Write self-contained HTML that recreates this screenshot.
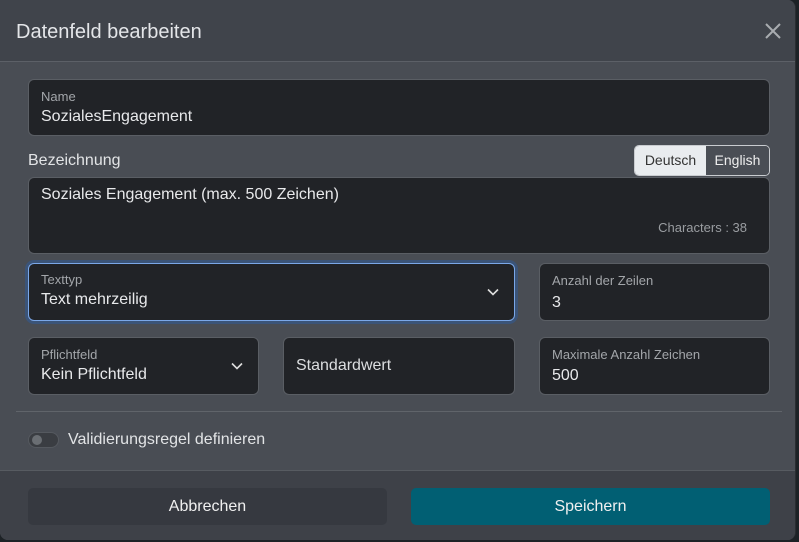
<!DOCTYPE html>
<html><head><meta charset="utf-8"><style>
*{box-sizing:border-box;margin:0;padding:0}
body{width:799px;height:542px;background:#1d2226;font-family:"Liberation Sans",sans-serif;position:relative;overflow:hidden}
.modal{position:absolute;left:0;top:0;width:796px;height:540px;background:#494d54;border-radius:0 8px 8px 8px;overflow:hidden;border-right:1px solid #2a2d31}
.hdr{position:absolute;left:0;top:0;right:0;height:62px;background:#40444b;border-bottom:1px solid #5c6067}
.hdr h1{position:absolute;left:16px;top:21px;font-size:20px;font-weight:normal;color:#e4e6e9}
.x{position:absolute;left:764px;top:22px}
.f{position:absolute;background:#212327;border:1px solid #5a5e64;border-radius:6px}
.lb{position:absolute;left:12px;font-size:13px;color:#a3a6aa}
.v{position:absolute;left:12px;font-size:16px;color:#e8e9eb}
.chev{position:absolute;top:50%;margin-top:-4px}
.ftr{position:absolute;left:0;right:0;top:470px;bottom:0;background:#3e4148;border-top:1px solid #575b61}
.btn{position:absolute;top:17px;height:37px;border-radius:5px;font-size:16px;color:#f0f0f0;text-align:center;line-height:37px}
</style></head><body>
<div class="modal">
<div class="hdr"><h1>Datenfeld bearbeiten</h1>
<svg class="x" width="18" height="18" viewBox="0 0 18 18"><path d="M2 2L16 16M16 2L2 16" stroke="#a9acb0" stroke-width="2"/></svg></div>

<div class="f" style="left:28px;top:79px;width:742px;height:57px"><div class="lb" style="top:9px">Name</div><div class="v" style="top:28px">SozialesEngagement</div></div>

<div style="position:absolute;left:28px;top:152px;font-size:16px;color:#e2e4e6">Bezeichnung</div>
<div style="position:absolute;left:634px;top:145px;width:136px;height:31px;border:1px solid #c9ccd0;border-radius:5px;overflow:hidden;font-size:14px">
<div style="position:absolute;left:0;top:0;width:71px;height:100%;background:#e9ecef;color:#333;text-align:center;line-height:29px">Deutsch</div>
<div style="position:absolute;left:71px;top:0;right:0;height:100%;background:#4a4e55;color:#eee;text-align:center;line-height:29px">English</div></div>

<div class="f" style="left:28px;top:177px;width:742px;height:77px"><div class="v" style="top:8px">Soziales Engagement (max. 500 Zeichen)</div>
<div style="position:absolute;right:22px;top:42px;font-size:13px;color:#9a9da1">Characters : 38</div></div>

<div class="f" style="left:28px;top:263px;width:487px;height:58px;border:1px solid #7aa7e8;box-shadow:0 0 0 3px #3b5478"><div class="lb" style="top:8px">Texttyp</div><div class="v" style="top:27px">Text mehrzeilig</div>
<svg class="chev" style="right:15px" width="12" height="8" viewBox="0 0 12 8"><path d="M1 1.5L6 6.5L11 1.5" stroke="#ddd" stroke-width="1.6" fill="none"/></svg></div>

<div class="f" style="left:539px;top:263px;width:231px;height:58px"><div class="lb" style="top:9px">Anzahl der Zeilen</div><div class="v" style="top:30px">3</div></div>

<div class="f" style="left:28px;top:337px;width:231px;height:58px"><div class="lb" style="top:9px">Pflichtfeld</div><div class="v" style="top:28px">Kein Pflichtfeld</div>
<svg class="chev" style="right:15px" width="12" height="8" viewBox="0 0 12 8"><path d="M1 1.5L6 6.5L11 1.5" stroke="#ddd" stroke-width="1.6" fill="none"/></svg></div>

<div class="f" style="left:283px;top:337px;width:232px;height:58px"><div class="v" style="top:19px;color:#dcdee0">Standardwert</div></div>

<div class="f" style="left:539px;top:337px;width:231px;height:58px"><div class="lb" style="top:9px">Maximale Anzahl Zeichen</div><div class="v" style="top:29px">500</div></div>

<div style="position:absolute;left:16px;top:411px;width:766px;height:1px;background:#60646a"></div>
<div style="position:absolute;left:28px;top:432px;width:31px;height:16px;border-radius:8px;background:#3a3d42;border:1px solid #55595f"><div style="position:absolute;left:3px;top:2px;width:10px;height:10px;border-radius:50%;background:#6a6e73"></div></div>
<div style="position:absolute;left:68px;top:431px;font-size:16px;color:#e2e4e6">Validierungsregel definieren</div>

<div class="ftr">
<div class="btn" style="left:28px;width:359px;background:#363940">Abbrechen</div>
<div class="btn" style="left:411px;width:359px;background:#015f73">Speichern</div>
</div>
</div>
</body></html>
